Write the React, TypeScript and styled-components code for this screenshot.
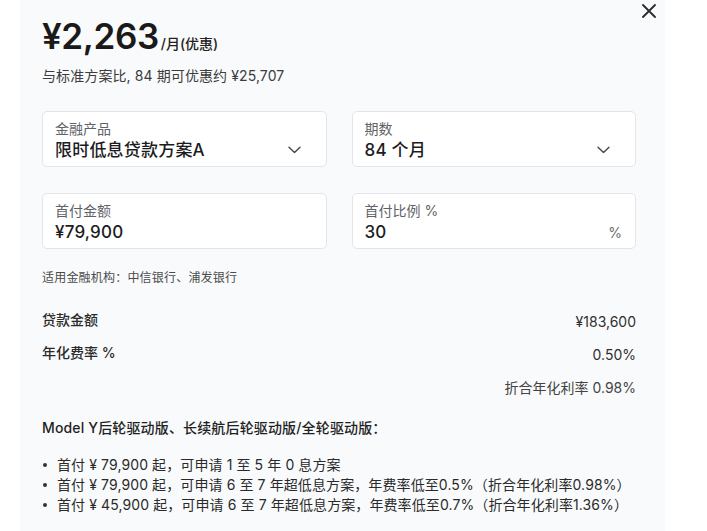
import React from "react";
import styled, { createGlobalStyle } from "styled-components";

const Global = createGlobalStyle`
  html, body { margin: 0; padding: 0; background: #ffffff; }
  body {
    font-family: Inter, "Noto Sans CJK SC", "Noto Sans", sans-serif;
    color: #1c1c1e;
    -webkit-font-smoothing: antialiased;
  }
`;

const Page = styled.div`
  width: 707px;
  height: 531px;
  overflow: hidden;
  background: #ffffff;
`;

const Panel = styled.div`
  position: relative;
  margin-left: 20px;
  width: 645px;
  height: 531px;
  box-sizing: border-box;
  background: #f9fafb;
  padding: 14px 29px 0 22px;
`;

const CloseButton = styled.button`
  position: absolute;
  left: 620px;
  top: 2px;
  width: 17px;
  height: 17px;
  padding: 0;
  border: none;
  background: transparent;
  display: flex;
  align-items: center;
  justify-content: center;
  cursor: pointer;
`;

const PriceLine = styled.div`
  display: flex;
  align-items: baseline;
  height: 44px;
`;

const Price = styled.span`
  font-size: 35px;
  font-weight: 600;
  line-height: 44px;
  letter-spacing: -0.4px;
  color: #1a1a1a;
`;

const PriceUnit = styled.span`
  font-size: 14px;
  font-weight: 500;
  line-height: 20px;
  margin-left: 2px;
  color: #222;
`;

const Subtitle = styled.div`
  margin-top: 8px;
  font-size: 14px;
  line-height: 20px;
  letter-spacing: 0.1px;
  color: #3c3c3c;
`;

const FieldGrid = styled.div`
  margin-top: 25px;
  display: grid;
  grid-template-columns: 1fr 1fr;
  column-gap: 25px;
  row-gap: 26px;
`;

const Field = styled.div`
  height: 56px;
  box-sizing: border-box;
  border: 1px solid #e3e5e9;
  border-radius: 5px;
  background: #ffffff;
  padding: 8px 13px 0 12px;
  display: flex;
  flex-direction: column;
  gap: 1px;
`;

const FieldLabel = styled.div`
  font-size: 14px;
  line-height: 18px;
  color: #5f6368;
`;

const FieldValueRow = styled.div`
  display: flex;
  align-items: center;
  justify-content: space-between;
  height: 22px;
`;

const FieldValue = styled.span`
  font-size: 17px;
  line-height: 22px;
  font-weight: 500;
  letter-spacing: 0.2px;
  color: #1c1c1e;
`;

const Suffix = styled.span<{ $gap?: number }>`
  display: flex;
  align-items: center;
  margin-right: ${(p) => p.$gap ?? 0}px;
  font-size: 14px;
  color: #6b6e73;
`;

const Note = styled.div`
  margin-top: 20px;
  font-size: 12px;
  line-height: 18px;
  letter-spacing: 0.2px;
  color: #4a4a4a;
`;

const Summary = styled.div`
  margin-top: 23px;
  display: flex;
  flex-direction: column;
  gap: 13px;
`;

const SummaryRow = styled.div<{ $align?: string }>`
  display: flex;
  align-items: flex-end;
  justify-content: ${(p) => p.$align ?? "space-between"};
  font-size: 14px;
  line-height: 20px;
`;

const SummaryLabel = styled.span`
  font-weight: 500;
  color: #2a2a2a;
`;

const SummaryValue = styled.span`
  color: #2f2f2f;
  transform: translateY(2px);
`;

const SubNote = styled.span`
  margin-top: 2px;
  color: #444;
`;

const Heading = styled.div`
  margin-top: 20px;
  font-size: 14px;
  line-height: 20px;
  font-weight: 500;
  letter-spacing: 0.15px;
  color: #1f1f1f;
`;

const BulletList = styled.ul`
  margin: 17px 0 0;
  padding: 0;
  list-style: none;
  display: flex;
  flex-direction: column;
`;

const Bullet = styled.li`
  display: flex;
  align-items: center;
  gap: 10px;
  font-size: 14px;
  line-height: 20px;
  letter-spacing: 0.1px;
  color: #2a2a2a;
`;

const Dot = styled.span`
  width: 4px;
  height: 4px;
  border-radius: 50%;
  background: #333;
  margin-left: 1px;
  flex: none;
`;

const Chevron = () => (
  <svg width="13" height="8" viewBox="0 0 13 8" fill="none">
    <path d="M1 1.2 L6.5 6.5 L12 1.2" stroke="#44474c" strokeWidth="1.4" strokeLinecap="round" strokeLinejoin="round" />
  </svg>
);

const CloseIcon = () => (
  <svg width="14" height="14" viewBox="0 0 14 14" fill="none">
    <path d="M1 1 L13 13 M13 1 L1 13" stroke="#2b2b2b" strokeWidth="1.8" strokeLinecap="round" />
  </svg>
);

const bullets = [
  "首付 ¥ 79,900 起，可申请 1 至 5 年 0 息方案",
  "首付 ¥ 79,900 起，可申请 6 至 7 年超低息方案，年费率低至0.5%（折合年化利率0.98%）",
  "首付 ¥ 45,900 起，可申请 6 至 7 年超低息方案，年费率低至0.7%（折合年化利率1.36%）",
];

export default function App() {
  return (
    <Page>
      <Global />
      <Panel>
        <CloseButton aria-label="关闭">
          <CloseIcon />
        </CloseButton>
        <PriceLine>
          <Price>¥2,263</Price>
          <PriceUnit>/月(优惠)</PriceUnit>
        </PriceLine>
        <Subtitle>与标准方案比, 84 期可优惠约 ¥25,707</Subtitle>

        <FieldGrid>
          <Field>
            <FieldLabel>金融产品</FieldLabel>
            <FieldValueRow>
              <FieldValue>限时低息贷款方案A</FieldValue>
              <Suffix $gap={12}><Chevron /></Suffix>
            </FieldValueRow>
          </Field>
          <Field>
            <FieldLabel>期数</FieldLabel>
            <FieldValueRow>
              <FieldValue>84 个月</FieldValue>
              <Suffix $gap={12}><Chevron /></Suffix>
            </FieldValueRow>
          </Field>
          <Field>
            <FieldLabel>首付金额</FieldLabel>
            <FieldValueRow>
              <FieldValue>¥79,900</FieldValue>
            </FieldValueRow>
          </Field>
          <Field>
            <FieldLabel>首付比例 %</FieldLabel>
            <FieldValueRow>
              <FieldValue>30</FieldValue>
              <Suffix>%</Suffix>
            </FieldValueRow>
          </Field>
        </FieldGrid>

        <Note>适用金融机构：中信银行、浦发银行</Note>

        <Summary>
          <SummaryRow>
            <SummaryLabel>贷款金额</SummaryLabel>
            <SummaryValue>¥183,600</SummaryValue>
          </SummaryRow>
          <SummaryRow>
            <SummaryLabel>年化费率 %</SummaryLabel>
            <SummaryValue>0.50%</SummaryValue>
          </SummaryRow>
          <SummaryRow $align="flex-end">
            <SubNote>折合年化利率 0.98%</SubNote>
          </SummaryRow>
        </Summary>

        <Heading>Model Y后轮驱动版、长续航后轮驱动版/全轮驱动版：</Heading>
        <BulletList>
          {bullets.map((b) => (
            <Bullet key={b}>
              <Dot />
              {b}
            </Bullet>
          ))}
        </BulletList>
      </Panel>
    </Page>
  );
}
